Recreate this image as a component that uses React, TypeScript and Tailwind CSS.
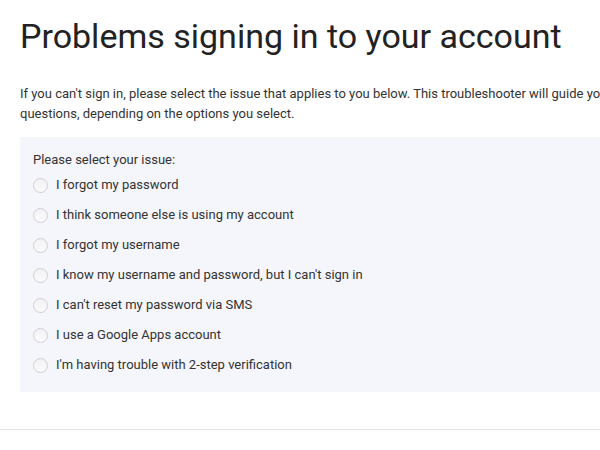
const issues = [
  "I forgot my password",
  "I think someone else is using my account",
  "I forgot my username",
  "I know my username and password, but I can't sign in",
  "I can't reset my password via SMS",
  "I use a Google Apps account",
  "I'm having trouble with 2-step verification",
];

export default function App() {
  return (
    <div className="h-[450px] w-[600px] overflow-hidden bg-white font-['Roboto',sans-serif] text-[#333]">
      <div className="w-[860px] pl-5">
        <h1 className="pt-[12px] text-[34px] font-normal leading-[48px] text-[#222]">
          Problems signing in to your account
        </h1>
        <p className="mt-[24px] text-[13px] leading-[20px] text-[#333]">
          If you can't sign in, please select the issue that applies to you below. This troubleshooter will guide you through a few
          <br />
          questions, depending on the options you select.
        </p>
        <div className="mt-[13px] h-[255px] bg-[#f5f6fb] pl-[13px] pt-[13px]">
          <div className="text-[13px] leading-[20px]">Please select your issue:</div>
          <div className="flex flex-col">
            {issues.map((label) => (
              <label key={label} className="flex h-[30px] items-center gap-2">
                <span className="h-[15px] w-[15px] rounded-full border border-[#cfcfd4] bg-gradient-to-b from-[#f2f2f4] to-[#fbfbfc]" />
                <span className="text-[13px] leading-[20px] text-[#333]">{label}</span>
              </label>
            ))}
          </div>
        </div>
      </div>
      <div className="mt-[37px] border-t border-[#e3e3e3]" />
    </div>
  );
}
